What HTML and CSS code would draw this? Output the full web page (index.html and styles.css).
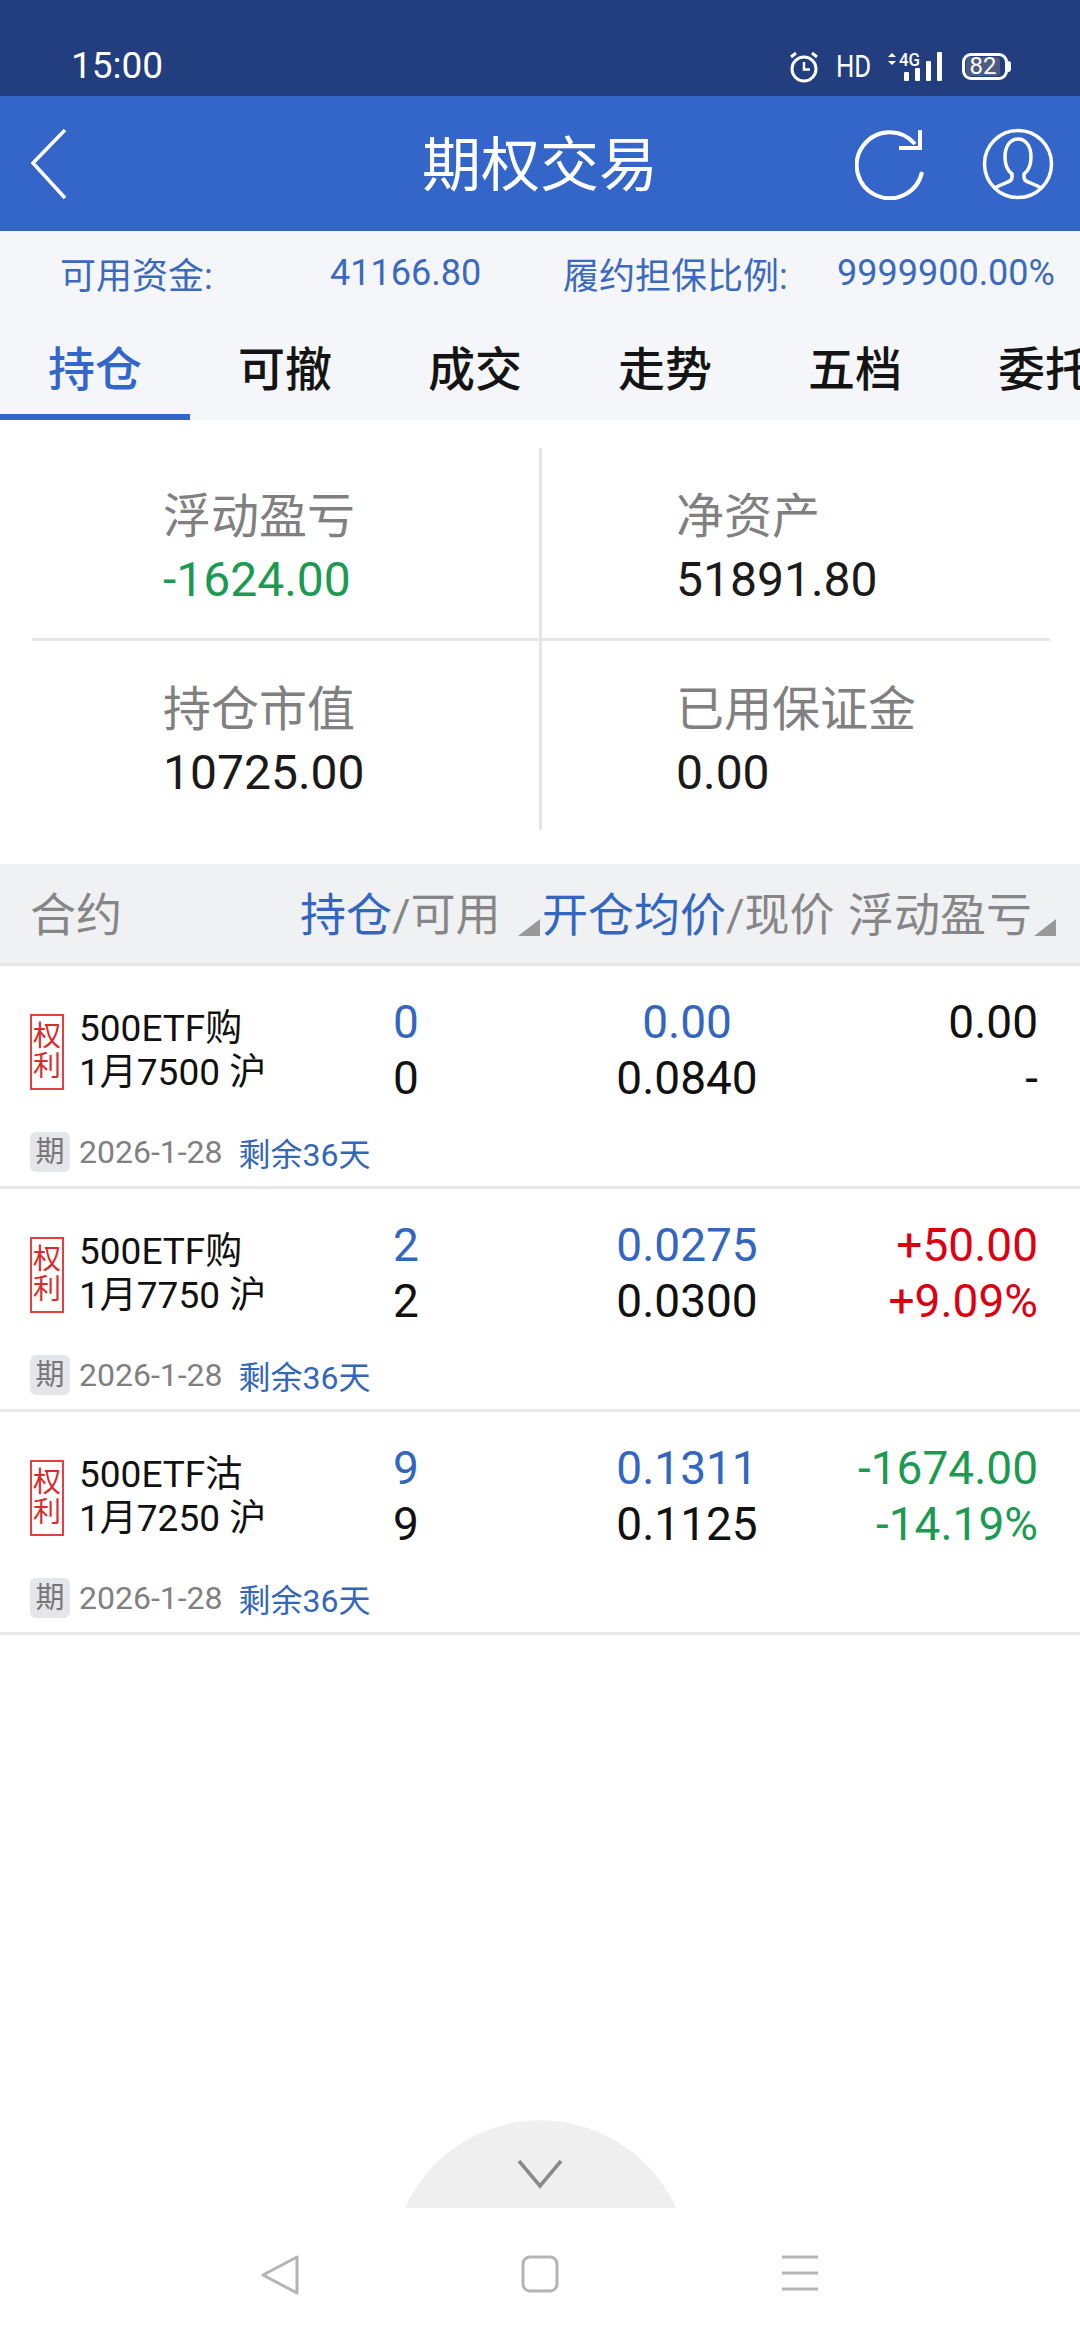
FILE: index.html
```html
<!DOCTYPE html>
<html lang="zh">
<head>
<meta charset="utf-8">
<title>期权交易</title>
<link rel="stylesheet" href="styles.css">
</head>
<body>
<div class="page">
  <div class="status">
    <span class="time">15:00</span>
    <div class="status-right">
      <svg class="alarm" width="32" height="32" viewBox="0 0 32 32" fill="none" stroke="#fff" stroke-width="3">
        <circle cx="16" cy="18" r="12"/>
        <path d="M16 11v7.500h6" stroke-width="2.500"/>
        <path d="M3 6l5-4M29 6l-5-4" stroke-width="3"/>
      </svg>
      <span class="hd">HD</span>
      <svg class="signal" width="60" height="32" viewBox="0 0 60 32">
        <path d="M3 6l4-4 4 4zM3 10l4 4 4-4z" fill="#fff"/>
        <text x="14" y="15" class="fourg" textLength="21" lengthAdjust="spacingAndGlyphs">4G</text>
        <rect x="19" y="21" width="5" height="9" rx="1" fill="#fff"/>
        <rect x="30" y="17" width="5" height="13" rx="1" fill="#fff"/>
        <rect x="41" y="10" width="5" height="20" rx="1" fill="#fff"/>
        <rect x="52" y="1" width="5" height="29" rx="1" fill="#fff"/>
      </svg>
      <div class="battery"><span class="battery-level">82</span></div>
    </div>
  </div>

  <header class="appbar">
    <svg class="back" width="36" height="72" viewBox="0 0 36 72" fill="none" stroke="#fff" stroke-width="3.500">
      <path d="M34 2L2 35l32 35"/>
    </svg>
    <h1 class="title">期权交易</h1>
    <div class="appbar-actions">
      <svg width="70" height="72" viewBox="0 0 70 72" fill="none" stroke="#fff" stroke-width="4">
        <path d="M67 44A33 33 0 1 1 60 16"/>
        <path d="M44 20h21V2"/>
      </svg>
      <svg width="72" height="72" viewBox="0 0 72 72" fill="none" stroke="#fff" stroke-width="3.500">
        <circle cx="36" cy="36" r="33.500"/>
        <path d="M12 60l14-6c3-1 4-3 4-5v-3c-4-3-7-8-7-17 0-12 6-18 13-18s13 6 13 18c0 9-3 14-7 17v3c0 2 1 4 4 5l14 6"/>
      </svg>
    </div>
  </header>

  <div class="summary">
    <span class="sum-a">可用资金:</span>
    <span class="sum-b">41166.80</span>
    <span class="sum-c">履约担保比例:</span>
    <span class="sum-d">9999900.00%</span>
  </div>

  <nav class="tabs">
    <span class="tab tab-active">持仓</span>
    <span class="tab">可撤</span>
    <span class="tab">成交</span>
    <span class="tab">走势</span>
    <span class="tab">五档</span>
    <span class="tab tab-last">委托</span>
  </nav>

  <section class="stats">
    <div class="stat stat-tl">
      <div class="stat-label">浮动盈亏</div>
      <div class="stat-value green">-1624.00</div>
    </div>
    <div class="stat stat-tr">
      <div class="stat-label">净资产</div>
      <div class="stat-value">51891.80</div>
    </div>
    <div class="stat stat-bl">
      <div class="stat-label">持仓市值</div>
      <div class="stat-value">10725.00</div>
    </div>
    <div class="stat stat-br">
      <div class="stat-label">已用保证金</div>
      <div class="stat-value">0.00</div>
    </div>
  </section>

  <div class="thead">
    <span class="th th-name">合约</span>
    <span class="th th-qty"><b>持仓</b>/可用<i class="tri"></i></span>
    <span class="th th-avg"><b>开仓均价</b>/现价</span>
    <span class="th th-pl">浮动盈亏<i class="tri"></i></span>
  </div>

  <article class="row">
    <div class="row-main">
      <div class="contract">
        <span class="tag">权利</span>
        <div class="contract-name"><div>500ETF购</div><div>1月7500 沪</div></div>
      </div>
      <div class="cell center"><div class="blue">0</div><div>0</div></div>
      <div class="cell center"><div class="blue">0.00</div><div>0.0840</div></div>
      <div class="cell right"><div>0.00</div><div>-</div></div>
    </div>
    <div class="row-foot"><span class="badge">期</span><span class="date">2026-1-28</span><span class="left">剩余36天</span></div>
  </article>

  <article class="row">
    <div class="row-main">
      <div class="contract">
        <span class="tag">权利</span>
        <div class="contract-name"><div>500ETF购</div><div>1月7750 沪</div></div>
      </div>
      <div class="cell center"><div class="blue">2</div><div>2</div></div>
      <div class="cell center"><div class="blue">0.0275</div><div>0.0300</div></div>
      <div class="cell right red"><div>+50.00</div><div>+9.09%</div></div>
    </div>
    <div class="row-foot"><span class="badge">期</span><span class="date">2026-1-28</span><span class="left">剩余36天</span></div>
  </article>

  <article class="row">
    <div class="row-main">
      <div class="contract">
        <span class="tag">权利</span>
        <div class="contract-name"><div>500ETF沽</div><div>1月7250 沪</div></div>
      </div>
      <div class="cell center"><div class="blue">9</div><div>9</div></div>
      <div class="cell center"><div class="blue">0.1311</div><div>0.1125</div></div>
      <div class="cell right green"><div>-1674.00</div><div>-14.19%</div></div>
    </div>
    <div class="row-foot"><span class="badge">期</span><span class="date">2026-1-28</span><span class="left">剩余36天</span></div>
  </article>

  <div class="spacer"></div>

  <div class="handle">
    <svg width="46" height="30" viewBox="0 0 46 30" fill="none" stroke="#8a8a8a" stroke-width="3.500"><path d="M2 2l21 25L44 2"/></svg>
  </div>

  <footer class="navbar">
    <svg width="38" height="40" viewBox="0 0 38 40" fill="none" stroke="#b4b4b4" stroke-width="3" stroke-linejoin="round"><path d="M36 2v36L2 20z"/></svg>
    <svg width="38" height="38" viewBox="0 0 38 38" fill="none" stroke="#b4b4b4" stroke-width="3"><rect x="2" y="2" width="34" height="34" rx="7"/></svg>
    <svg width="38" height="36" viewBox="0 0 38 36" fill="none" stroke="#b4b4b4" stroke-width="3"><path d="M1 2h36M1 18h36M1 34h36"/></svg>
  </footer>
</div>
</body>
</html>
```

FILE: styles.css
```css
* { box-sizing: border-box; }
html, body { margin: 0; padding: 0; }
body {
  width: 1080px;
  height: 2340px;
  overflow: hidden;
  background: #fff;
  font-family: Roboto, "Noto Sans CJK SC", sans-serif;
  color: #111;
}
.page { width: 1080px; height: 2340px; display: flex; flex-direction: column; }

/* status bar */
.status {
  height: 96px;
  background: #223e7f;
  color: #fff;
  display: flex;
  align-items: flex-start;
  justify-content: space-between;
  padding: 44px 70px 0 71px;
}
.time { font-size: 37px; line-height: 44px; }
.status-right { display: flex; align-items: center; height: 44px; margin-top: 1px; }
.alarm { margin-right: 16px; }
.hd {
  display: block;
  width: 35px;
  font-size: 31px;
  line-height: 44px;
  margin-right: 14px;
  white-space: nowrap;
  transform: scaleX(0.83);
  transform-origin: left center;
}
.signal { margin-right: 17px; }
.fourg { font-size: 19px; font-weight: 500; fill: #fff; font-family: Roboto, sans-serif; }
.battery {
  position: relative;
  width: 46px;
  height: 27px;
  border: 3px solid #fff;
  border-radius: 9px;
  display: flex;
  padding: 1px;
  margin-right: 2px;
  margin-top: -2px;
}
.battery::after {
  content: "";
  position: absolute;
  right: -6px;
  top: 5px;
  width: 3px;
  height: 11px;
  background: #fff;
  border-radius: 0 3px 3px 0;
}
.battery-level {
  width: 34px;
  height: 19px;
  background: #4d5c80;
  border-radius: 4px;
  font-size: 24px;
  line-height: 19px;
  color: #fff;
  text-align: center;
}

/* app bar */
.appbar {
  height: 135px;
  background: #3366c8;
  display: flex;
  align-items: center;
  padding: 0 26px 0 31px;
  position: relative;
}
.back { flex: none; }
.title {
  position: absolute;
  left: 0;
  right: 0;
  margin: 5px 0 0;
  text-align: center;
  color: #fff;
  font-size: 59px;
  line-height: 80px;
  font-weight: 400;
}
.appbar-actions { margin-left: auto; display: flex; gap: 57px; align-items: center; }

/* summary */
.summary {
  height: 89px;
  background: #f5f6fa;
  color: #3b69bd;
  display: flex;
  align-items: center;
  font-size: 36px;
  padding: 0 0 5px 60px;
}
.sum-a { width: 270px; }
.sum-b { width: 233px; }
.sum-c { width: 274px; }
.sum-d { white-space: nowrap; }

/* tabs */
.tabs {
  height: 100px;
  background: #f5f6fa;
  display: flex;
}
.tab {
  flex: 0 0 190px;
  text-align: center;
  font-size: 47px;
  line-height: 100px;
  height: 100px;
  color: #141414;
  font-weight: 500;
}
.tab-last { flex: 0 0 130px; text-align: left; padding-left: 48px; overflow: hidden; white-space: nowrap; }
.tab-active { color: #3366c8; border-bottom: 6px solid #3366c8; }

/* stats */
.stats {
  height: 444px;
  padding: 28px 30px 34px 32px;
  display: grid;
  grid-template-columns: 510px 508px;
  grid-template-rows: 193px 189px;
}
.stat { padding-left: 131px; padding-top: 39px; }
.stat-tl { border-right: 3px solid #e6e6e6; border-bottom: 3px solid #e6e6e6; }
.stat-tr { border-bottom: 3px solid #e6e6e6; padding-left: 134px; }
.stat-bl { border-right: 3px solid #e6e6e6; }
.stat-br { padding-left: 134px; }
.stat-label { font-size: 48px; line-height: 60px; color: #808080; }
.stat-value { font-size: 48px; line-height: 66px; color: #1a1a1a; }
.green { color: #1c9a52; }
.stat-value.green { color: #1c9a52; }

/* table head */
.thead {
  height: 102px;
  background: #f0f1f3;
  border-bottom: 3px solid #e6e6e6;
  display: flex;
  align-items: center;
  padding: 0 0 6px 30px;
  color: #868686;
  font-size: 45px;
  white-space: nowrap;
}
.th b { font-weight: 400; color: #3366c0; font-size: 46px; }
.th-name { width: 270px; font-size: 46px; }
.th-qty { width: 242px; position: relative; }
.th-avg { width: 306px; }
.th-pl { position: relative; font-size: 46px; }
.tri {
  position: absolute;
  right: 2px;
  bottom: 8px;
  width: 0;
  height: 0;
  border-bottom: 17px solid #999;
  border-left: 22px solid transparent;
}
.th-pl .tri { right: -24px; }

/* rows */
.row {
  height: 223px;
  border-bottom: 3px solid #e8e8e8;
  padding: 28px 42px 0 30px;
}
.row-main {
  display: grid;
  grid-template-columns: 240px 272px 290px 206px;
  height: 112px;
}
.contract { display: flex; align-items: center; gap: 15px; padding-top: 4px; }
.tag {
  flex: none;
  width: 34px;
  height: 76px;
  border: 2px solid #e44040;
  color: #d92b2b;
  font-size: 28px;
  line-height: 30px;
  text-align: center;
  padding-top: 6px;
  word-break: break-all;
}
.contract-name { font-size: 37px; line-height: 44px; color: #111; white-space: nowrap; margin-top: -2px; }
.cell { font-size: 46px; line-height: 56px; color: #111; }
.center { text-align: center; }
.right { text-align: right; }
.blue { color: #3366c0; }
.red { color: #dc0011; }
.cell.red div { color: #dc0011; }
.cell.green div { color: #1c9a52; }

.row-foot { display: flex; align-items: center; margin-top: 26px; height: 40px; }
.badge {
  width: 40px;
  height: 40px;
  background: #e4e6ea;
  border-radius: 6px;
  color: #777;
  font-size: 29px;
  line-height: 40px;
  text-align: center;
  margin-right: 9px;
}
.date { font-size: 32px; color: #808080; margin-right: 16px; }
.left { font-size: 32px; color: #3366b8; }

/* bottom */
.spacer { flex: 1; }
.handle {
  width: 273px;
  height: 88px;
  margin: 0 auto;
  background: radial-gradient(circle 149px at 50% 149px, #efefef 99.5%, transparent 100%);
  display: flex;
  justify-content: center;
  padding-top: 39px;
}
.navbar {
  height: 132px;
  display: flex;
  justify-content: center;
  align-items: flex-start;
  gap: 222px;
  padding-top: 47px;
}
```
